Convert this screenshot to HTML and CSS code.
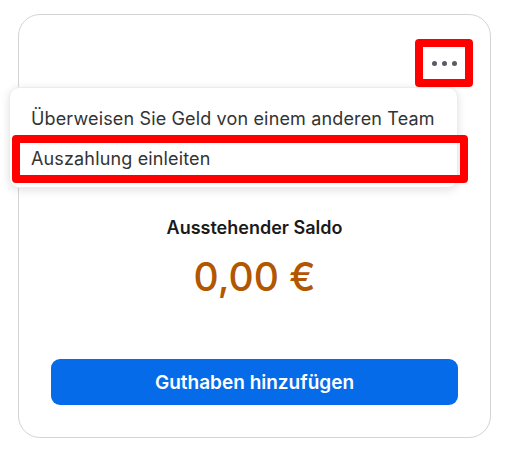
FILE: index.html
```html
<!DOCTYPE html>
<html lang="de">
<head>
<meta charset="utf-8">
<link rel="stylesheet" href="styles.css">
</head>
<body>
<div class="card">
  <div class="header">
    <button class="more" aria-label="Mehr">
      <span class="dot"></span><span class="dot"></span><span class="dot"></span>
      <span class="annot annot-more"></span>
    </button>
  </div>
  <div class="menu">
    <div class="menu-item">Überweisen Sie Geld von einem anderen Team</div>
    <div class="menu-item">Auszahlung einleiten<span class="annot annot-item"></span></div>
  </div>
  <div class="title">Ausstehender Saldo</div>
  <div class="amount">0,00 €</div>
  <button class="primary">Guthaben hinzufügen</button>
</div>
</body>
</html>
```
FILE: styles.css
```css
* { box-sizing: border-box; }
html, body { margin: 0; background: #fff; }
body { font-family: Inter, "Noto Sans", sans-serif; color: #1a1a1a; }
.card {
  position: relative;
  margin: 14px 0 0 18px;
  width: 473px;
  height: 424px;
  border: 1px solid #d4d4d4;
  border-radius: 22px;
  padding: 32px 32px 31px 32px;
  display: flex;
  flex-direction: column;
  align-items: center;
}
.card > * { flex-shrink: 0; }
.header { align-self: stretch; display: flex; justify-content: flex-end; height: 32px; margin-right: -7px; }
.more {
  position: relative;
  width: 42px; height: 32px;
  border: 0; background: #fff; padding: 0;
  display: flex; align-items: center; justify-content: center; gap: 5px;
}
.dot { width: 5px; height: 5px; border-radius: 50%; background: #5b5b66; }
.annot { position: absolute; border: 8px solid #ff0000; border-radius: 4px; pointer-events: none; }
.annot-more { left: -8px; top: -8px; right: -8px; bottom: -8px; }
.menu {
  position: absolute;
  left: -10px; top: 72px;
  width: 449px; height: 101px;
  background: #fff;
  border: 1px solid #ececec;
  border-radius: 10px;
  box-shadow: 0 2px 10px rgba(0,0,0,0.12);
  padding: 10px 0;
  z-index: 2;
}
.menu-item {
  position: relative;
  height: 40px;
  padding-left: 21px;
  display: flex; align-items: center;
  font-size: 18px;
  letter-spacing: 0.15px;
  color: #333;
}
.annot-item { left: 2px; top: -3px; width: 456px; height: 48px; }
.title { margin-top: 137px; font-size: 18px; font-weight: 600; line-height: 24px; }
.amount { margin-top: 13px; font-size: 39px; font-weight: 500; color: #b25600; line-height: 48px; }
.primary {
  margin-top: 58px;
  width: 407px; height: 46px;
  border: 0; border-radius: 9px;
  background: #066be8;
  color: #fff;
  font-family: inherit;
  font-size: 19px; font-weight: 600;
}
```
